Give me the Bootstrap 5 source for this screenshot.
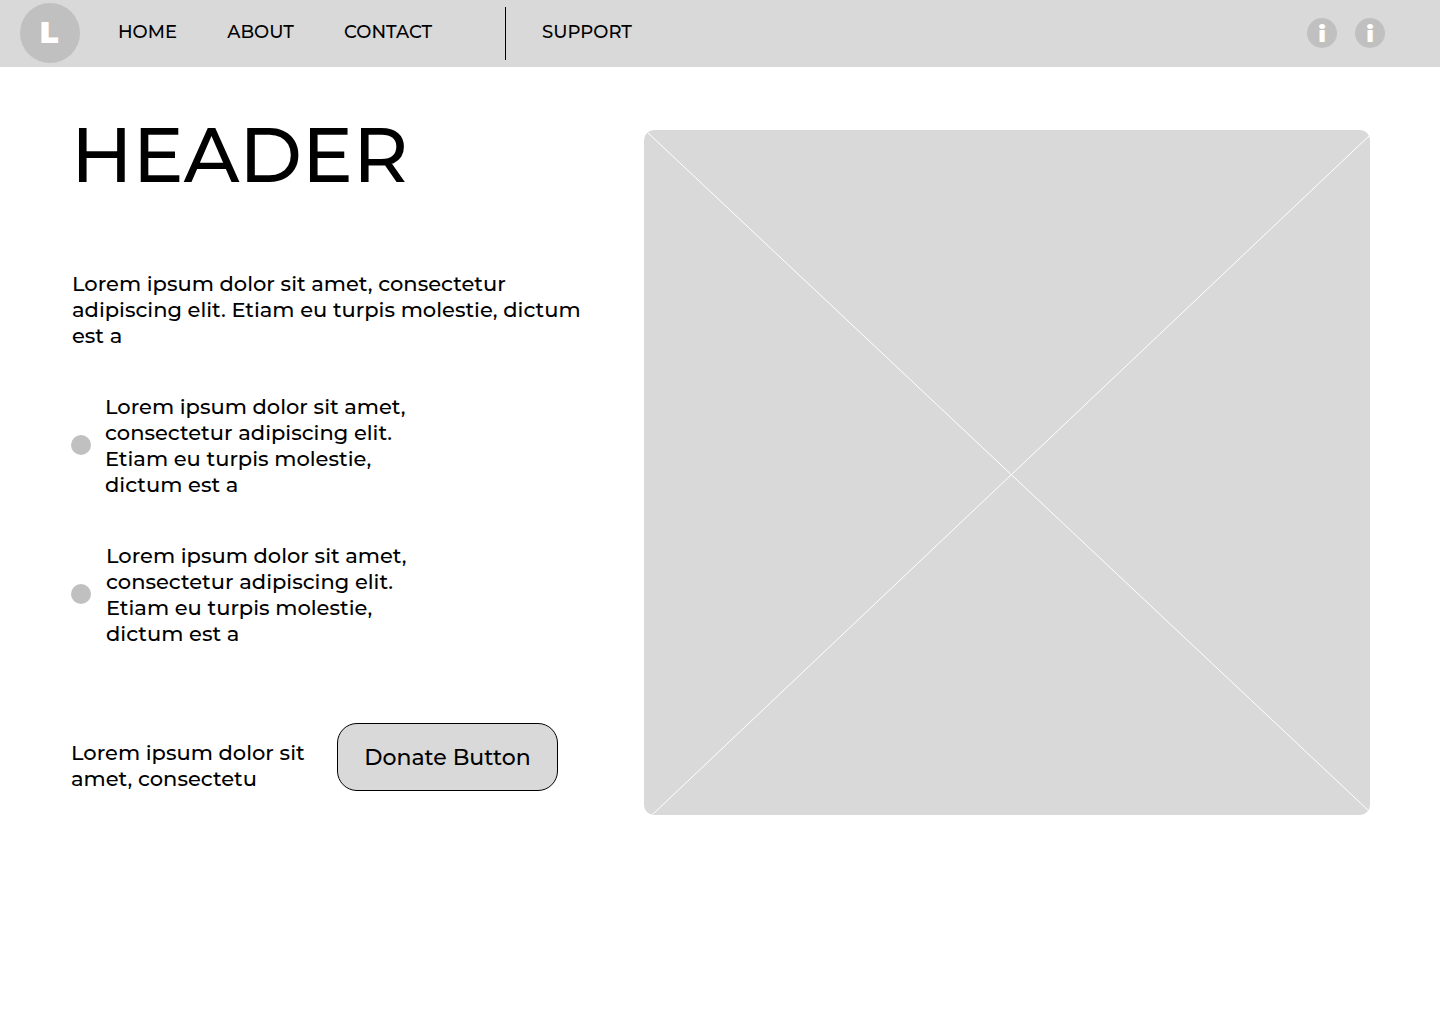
<!DOCTYPE html>
<html lang="en">
<head>
<meta charset="utf-8">
<meta name="viewport" content="width=device-width, initial-scale=1">
<title>Donate</title>
<link href="https://cdn.jsdelivr.net/npm/bootstrap@5.3.0/dist/css/bootstrap.min.css" rel="stylesheet">
<style>
body { font-family: Montserrat, Inter, sans-serif; font-weight: 500; color: #000; background: #fff; }
.topbar { height: 67px; background: #d9d9d9; padding: 0 55px 1px 20px; }
.disc { background: #c0c0c0; }
.logo { width: 60px; height: 60px; margin-right: 38px; padding-right: 2px; font-size: 30px; line-height: 60px; font-weight: 900; }
.topbar .nav-link { color: #000; font-size: 18px; line-height: 22px; padding: 0; margin-top: -2px; }
.menu { gap: 50.3px; }
.rule { width: 1px; height: 53px; background: #000; margin: 1px 36px 0 73px; }
.info-dot { width: 30px; height: 30px; font-size: 22px; line-height: 33px; font-weight: 900; }
.info-pair { gap: 18px; }
.page { padding: 63px 70px 0 71px; }
.copy { width: 573px; }
.title { font-size: 76px; line-height: 90px; font-weight: 500; margin: -20px 0 0 0; }
.txt { font-size: 21px; line-height: 26px; margin: 0; white-space: nowrap; }
.txt span { display: block; }
.intro { margin: 71px 0 0 1px; }
.dot { width: 20px; height: 20px; margin-bottom: 2px; }
.item { gap: 14px; margin-top: 45px; }
.item-wide { gap: 15px; }
.cta { height: 68px; margin-top: 76px; }
.cta-text { width: 266px; margin-bottom: -1px; }
.btn-donate { width: 221px; height: 68px; border: 1px solid #000; border-radius: 20px; background: #d9d9d9; font-size: 22px; font-weight: 500; line-height: 26px; color: #000; padding: 1px 0 0; }
.picture { width: 726px; height: 685px; border-radius: 10px; background: #d9d9d9; }
</style>
</head>
<body>
<nav class="topbar d-flex align-items-center">
  <a href="#" class="logo disc rounded-circle flex-shrink-0 text-white text-center text-decoration-none">L</a>
  <div class="menu nav flex-nowrap">
    <a class="nav-link" href="#">HOME</a>
    <a class="nav-link" href="#">ABOUT</a>
    <a class="nav-link" href="#">CONTACT</a>
  </div>
  <div class="rule"></div>
  <a class="nav-link" href="#">SUPPORT</a>
  <div class="info-pair d-flex ms-auto">
    <a href="#" class="info-dot disc rounded-circle text-white text-center text-decoration-none">i</a>
    <a href="#" class="info-dot disc rounded-circle text-white text-center text-decoration-none">i</a>
  </div>
</nav>
<main class="page d-flex">
  <section class="copy flex-shrink-0">
    <h1 class="title">HEADER</h1>
    <p class="txt intro"><span>Lorem ipsum dolor sit amet, consectetur</span><span>adipiscing elit. Etiam eu turpis molestie, dictum</span><span>est a</span></p>
    <div class="item d-flex align-items-center">
      <div class="dot disc rounded-circle"></div>
      <p class="txt"><span>Lorem ipsum dolor sit amet,</span><span>consectetur adipiscing elit.</span><span>Etiam eu turpis molestie,</span><span>dictum est a</span></p>
    </div>
    <div class="item item-wide d-flex align-items-center">
      <div class="dot disc rounded-circle"></div>
      <p class="txt"><span>Lorem ipsum dolor sit amet,</span><span>consectetur adipiscing elit.</span><span>Etiam eu turpis molestie,</span><span>dictum est a</span></p>
    </div>
    <div class="cta d-flex align-items-end">
      <p class="txt cta-text"><span>Lorem ipsum dolor sit</span><span>amet, consectetu</span></p>
      <button class="btn btn-donate" type="button">Donate Button</button>
    </div>
  </section>
  <div class="picture overflow-hidden">
    <svg class="d-block" width="726" height="685" stroke="#fff" stroke-width="1"><path d="M3 2L726 682M8 685L726 5"/></svg>
  </div>
</main>
<script src="https://cdn.jsdelivr.net/npm/bootstrap@5.3.0/dist/js/bootstrap.bundle.min.js"></script>
</body>
</html>
